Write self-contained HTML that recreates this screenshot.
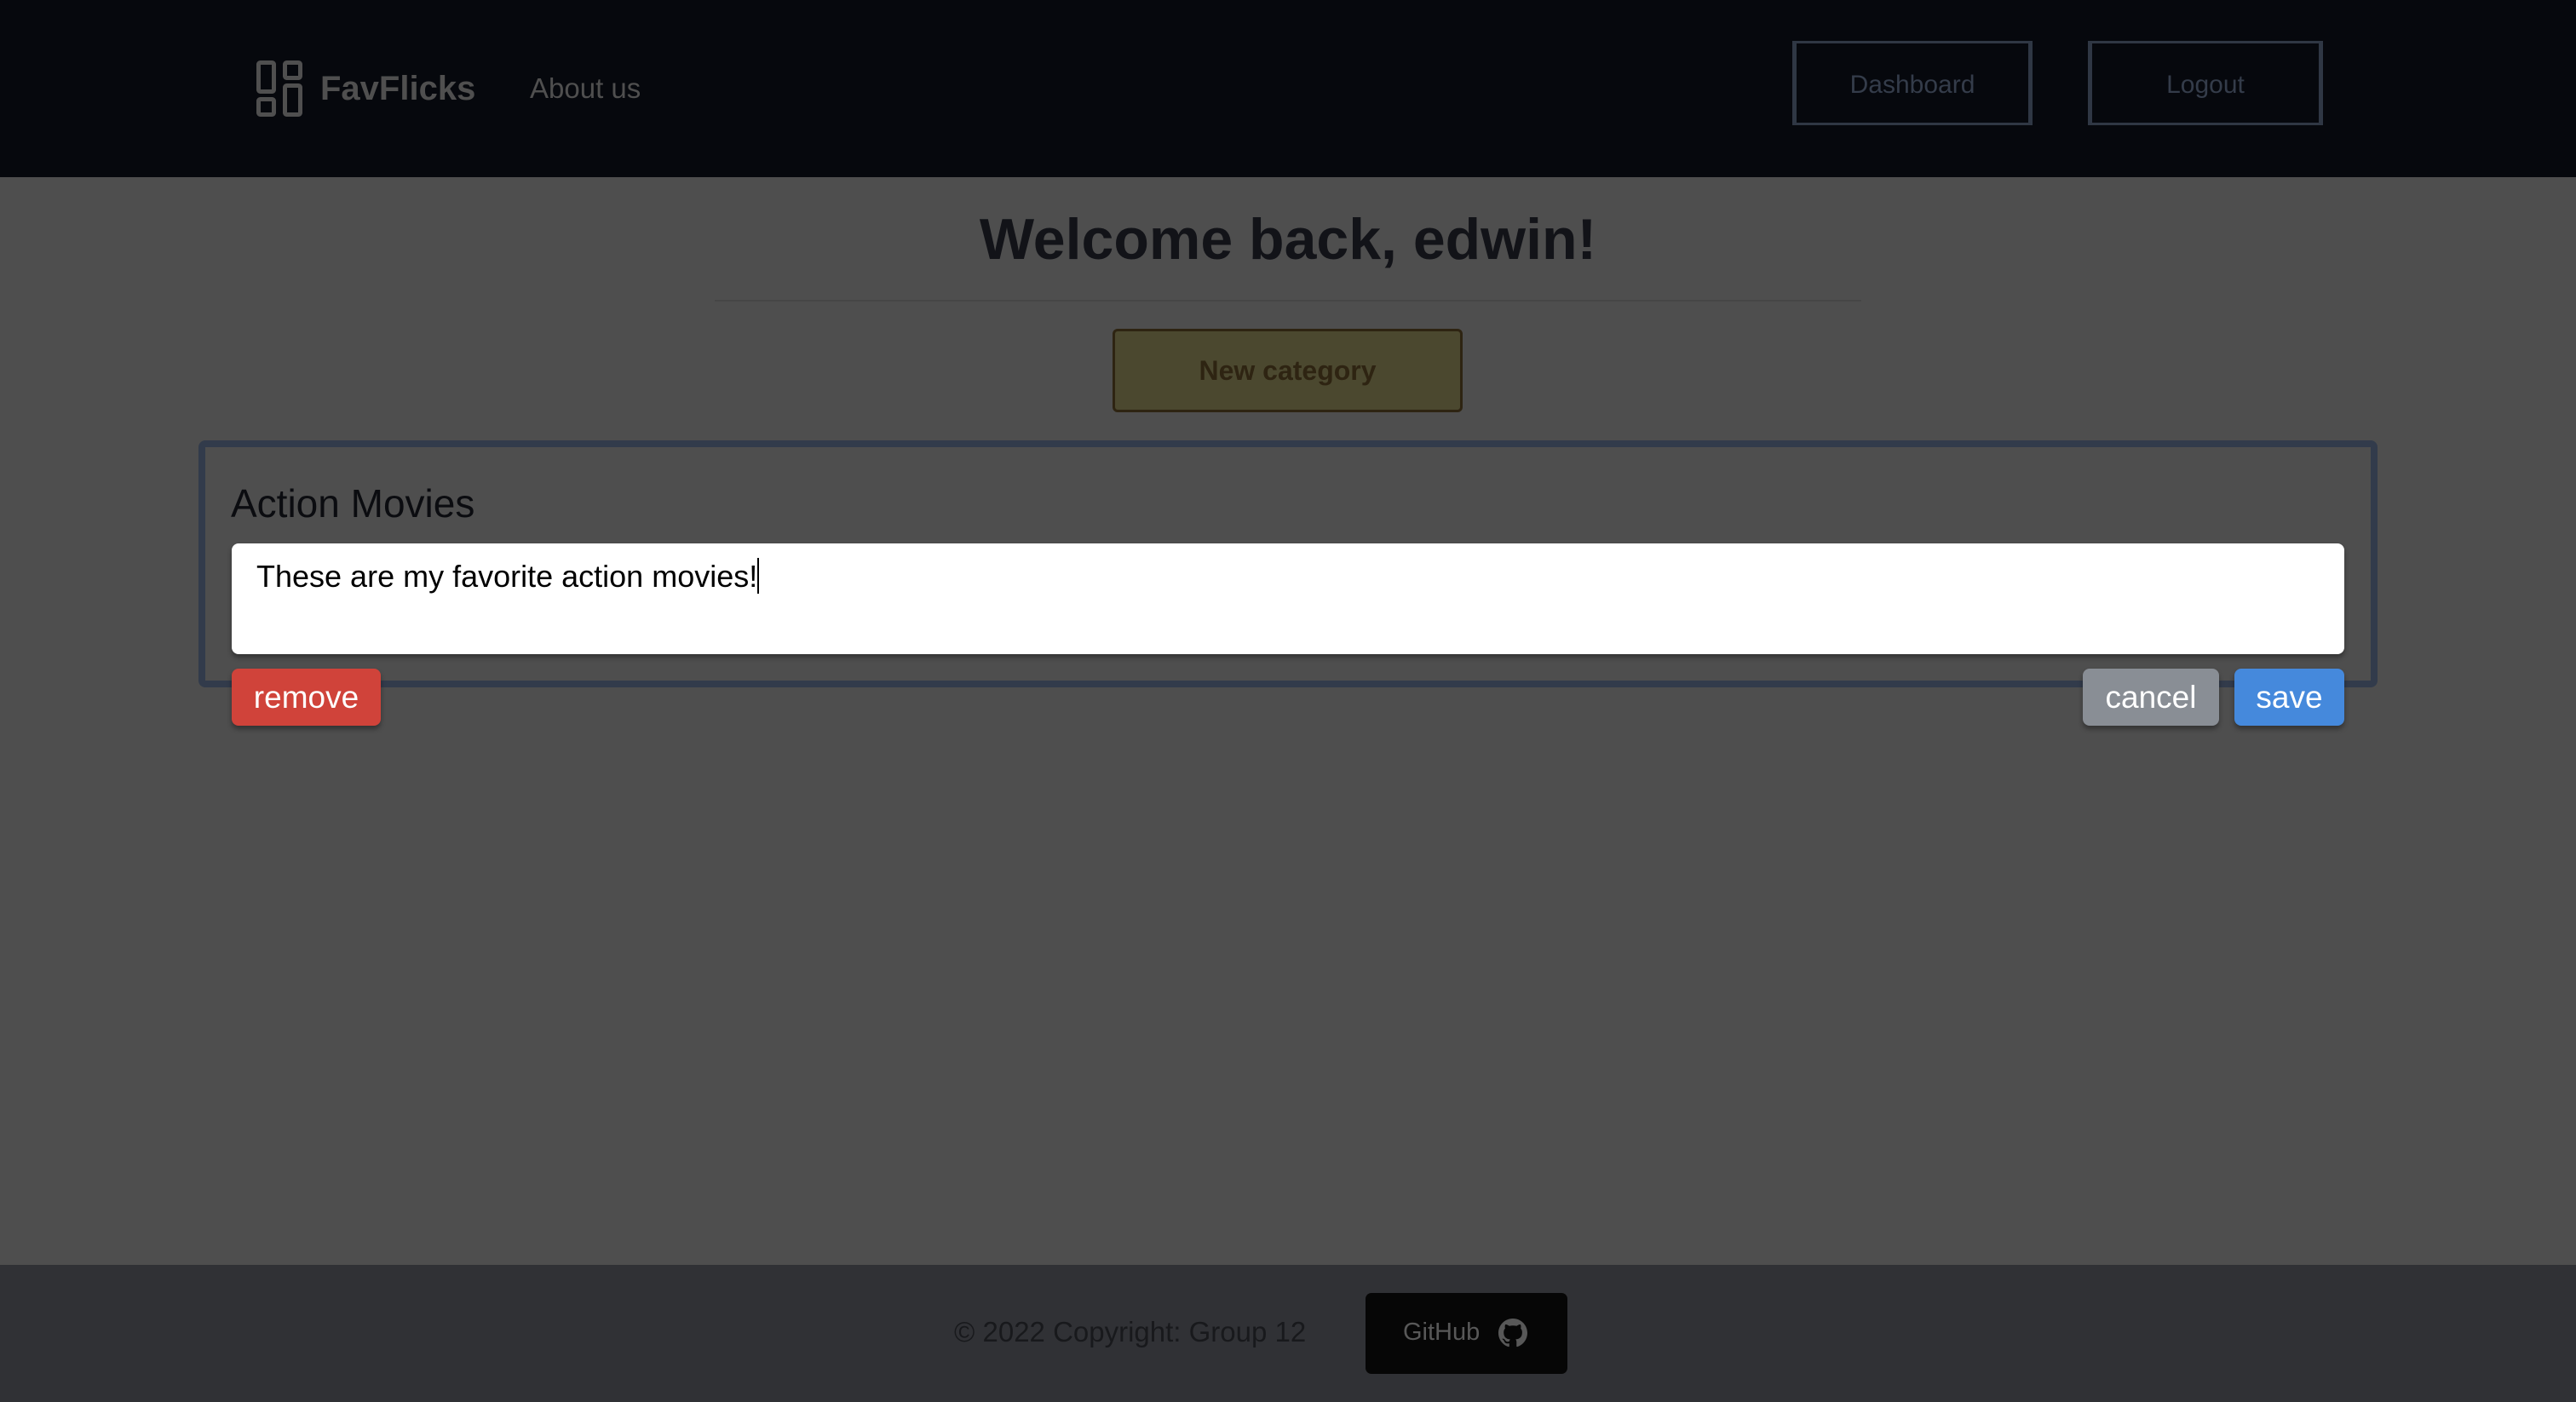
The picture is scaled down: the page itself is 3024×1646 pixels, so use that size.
<!DOCTYPE html>
<html><head><meta charset="utf-8"><style>
*{box-sizing:border-box;margin:0;padding:0}
body{width:3024px;height:1646px;background:#4e4e4e;font-family:"Liberation Sans",Arial,sans-serif;position:relative;overflow:hidden}
.abs{position:absolute}
header{position:absolute;left:0;top:0;width:3024px;height:208px;background:#06080d}
.nb{position:absolute;top:48px;height:99px;border:3px solid #2f3744;border-left-width:5px;border-right-width:5px;color:#343c4a;font-size:30px;font-weight:500;display:flex;align-items:center;justify-content:center;padding-top:4px}
.btn{position:absolute;color:#fff;font-size:37px;display:flex;align-items:center;justify-content:center;border-radius:8px;box-shadow:0 4px 6px rgba(0,0,0,.35)}
</style></head><body>
<header>
<svg class="abs" style="left:301px;top:71px" width="54" height="66" viewBox="0 0 54 66" fill="none" stroke="#4f4f4f" stroke-width="5">
<rect x="2.5" y="2.5" width="18" height="34" rx="2"/><rect x="33.5" y="2.5" width="18" height="18" rx="2"/>
<rect x="2.5" y="45.5" width="18" height="18" rx="2"/><rect x="33.5" y="29.5" width="18" height="34" rx="2"/></svg>
<div class="abs" style="left:376px;top:82px;font-size:40px;font-weight:bold;color:#4f4f4f">FavFlicks</div>
<div class="abs" style="left:622px;top:85px;font-size:33px;color:#4f4f4f">About us</div>
<div class="nb" style="left:2104px;width:282px">Dashboard</div>
<div class="nb" style="left:2451px;width:276px">Logout</div>
</header>
<div class="abs" style="left:0;width:3024px;top:242px;text-align:center;font-size:68px;font-weight:bold;color:#121318">Welcome back, edwin!</div>
<div class="abs" style="left:839px;top:352px;width:1346px;height:2px;background:#464646"></div>
<div class="abs" style="left:1306px;top:386px;width:411px;height:98px;background:#4b482f;border:3px solid #2e2412;border-radius:6px;display:flex;align-items:center;justify-content:center;font-size:32px;font-weight:bold;color:#2e2412">New category</div>
<div class="abs" style="left:233px;top:517px;width:2558px;height:290px;border:8px solid #323b4b;border-radius:8px"></div>
<div class="abs" style="left:271px;top:564px;font-size:46px;font-weight:500;color:#0b0c10">Action Movies</div>
<div class="abs" style="left:272px;top:638px;width:2480px;height:130px;background:#fff;border-radius:8px;box-shadow:0 4px 6px rgba(0,0,0,.35);padding:17px 0 0 29px;font-size:36px;color:#000">These are my favorite action movies!<span style="display:inline-block;width:2px;height:42px;background:#000;vertical-align:-8px"></span></div>
<div class="btn" style="left:272px;top:785px;width:175px;height:67px;background:#d0433a">remove</div>
<div class="btn" style="left:2445px;top:785px;width:160px;height:67px;background:#898e95">cancel</div>
<div class="btn" style="left:2623px;top:785px;width:129px;height:67px;background:#4589dc">save</div>
<div class="abs" style="left:0;top:1485px;width:3024px;height:161px;background:#303135"></div>
<div class="abs" style="left:1120px;top:1545px;font-size:33px;color:#18191c">© 2022 Copyright: Group 12</div>
<div class="abs" style="left:1603px;top:1518px;width:237px;height:95px;background:#060606;border-radius:7px"></div>
<div class="abs" style="left:1647px;top:1548px;font-size:29px;color:#585858">GitHub</div>
<svg class="abs" style="left:1759px;top:1548px" width="34" height="34" viewBox="0 0 16 16"><path fill="#585858" d="M8 0C3.58 0 0 3.58 0 8c0 3.54 2.29 6.53 5.47 7.59.4.07.55-.17.55-.38 0-.19-.01-.82-.01-1.49-2.01.37-2.53-.49-2.69-.94-.09-.23-.48-.94-.82-1.13-.28-.15-.68-.52-.01-.53.63-.01 1.08.58 1.23.82.72 1.21 1.87.87 2.33.66.07-.52.28-.87.51-1.07-1.78-.2-3.64-.89-3.64-3.95 0-.87.31-1.59.82-2.15-.08-.2-.36-1.02.08-2.12 0 0 .67-.21 2.2.82.64-.18 1.32-.27 2-.27.68 0 1.36.09 2 .27 1.53-1.04 2.2-.82 2.2-.82.44 1.1.16 1.92.08 2.12.51.56.82 1.27.82 2.15 0 3.07-1.87 3.75-3.65 3.95.29.25.54.73.54 1.48 0 1.07-.01 1.93-.01 2.2 0 .21.15.46.55.38A8.013 8.013 0 0016 8c0-4.42-3.58-8-8-8z"/></svg>
</body></html>
